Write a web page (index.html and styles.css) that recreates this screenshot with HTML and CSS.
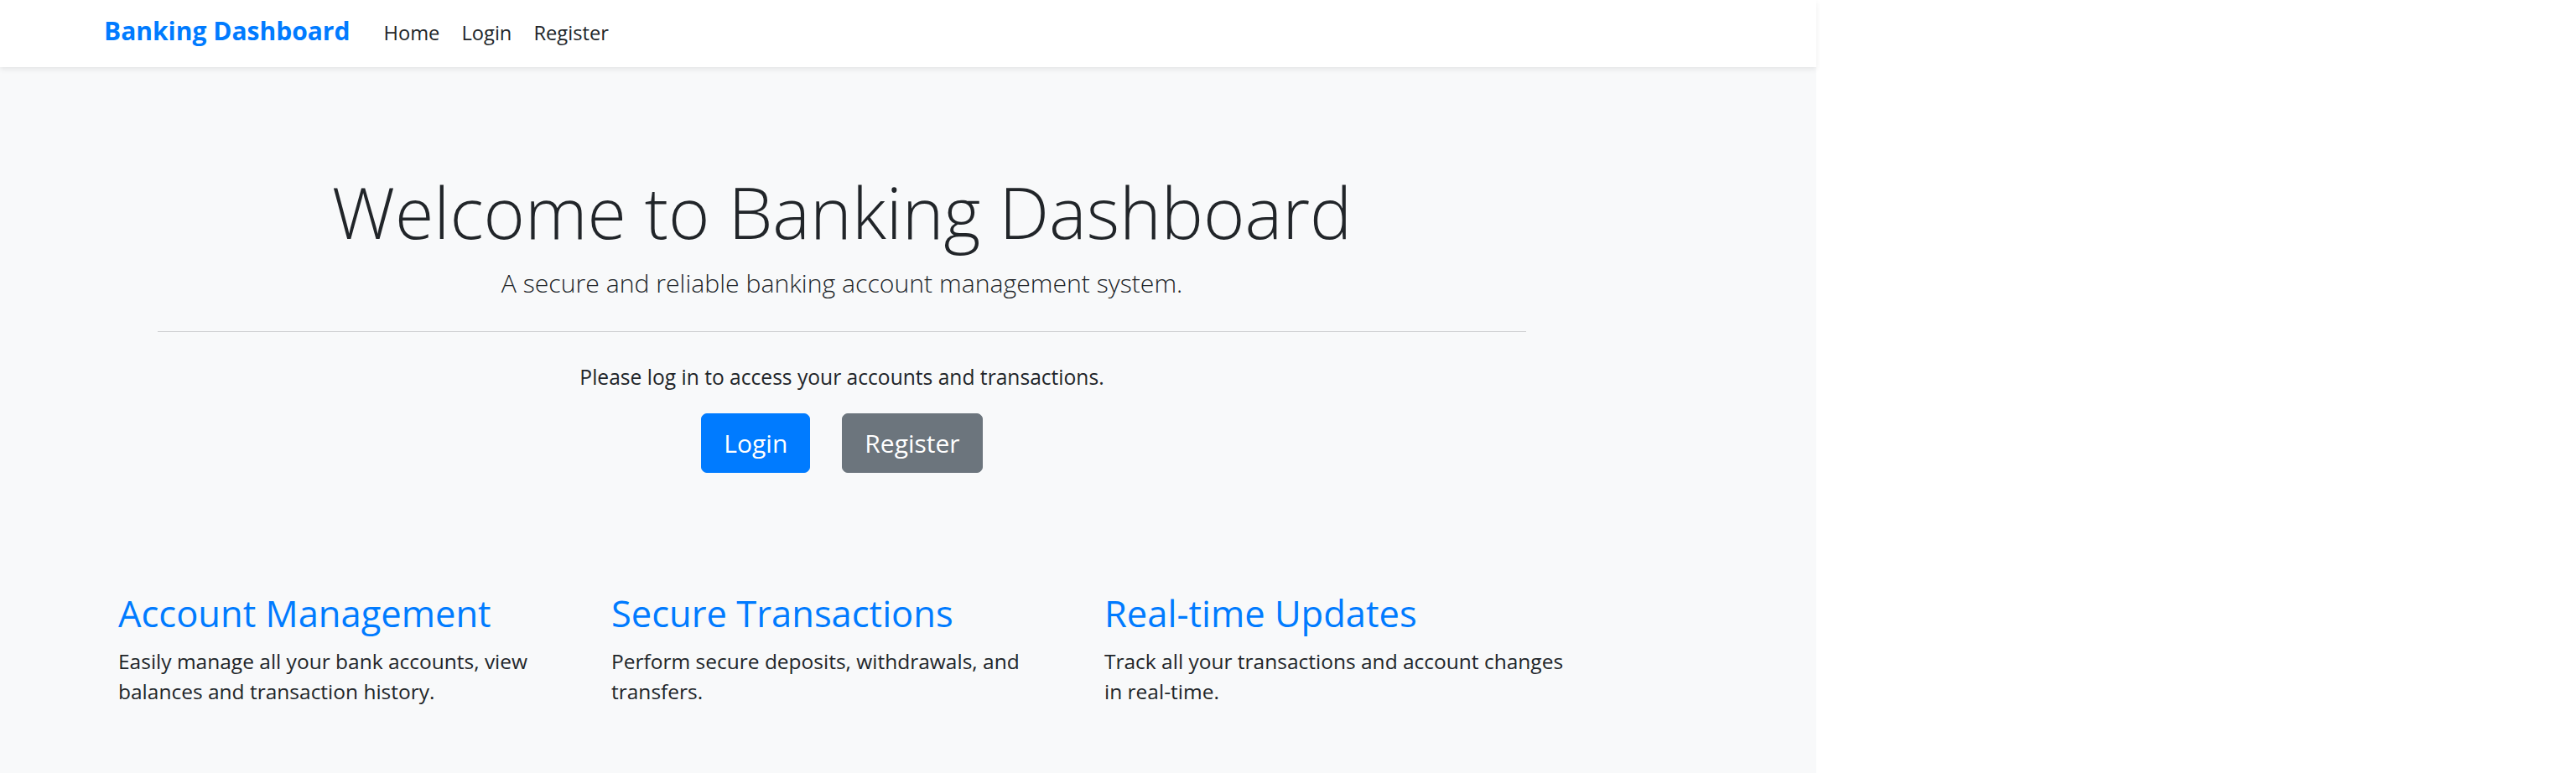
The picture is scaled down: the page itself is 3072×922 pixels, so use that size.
FILE: index.html
```html
<!DOCTYPE html>
<html lang="en">
<head>
<meta charset="utf-8">
<title>Banking Dashboard</title>
<link rel="stylesheet" href="styles.css">
</head>
<body>
<div class="app">
  <nav class="navbar">
    <a class="brand" href="#">Banking Dashboard</a>
    <ul class="nav">
      <li><a class="nav-link" href="#">Home</a></li>
      <li><a class="nav-link" href="#">Login</a></li>
      <li><a class="nav-link" href="#">Register</a></li>
    </ul>
  </nav>
  <main class="main">
    <section class="hero">
      <h1 class="display">Welcome to Banking Dashboard</h1>
      <p class="lead">A secure and reliable banking account management system.</p>
      <hr class="divider">
      <p class="prompt">Please log in to access your accounts and transactions.</p>
      <div class="actions">
        <a class="btn btn-primary" href="#">Login</a>
        <a class="btn btn-secondary" href="#">Register</a>
      </div>
    </section>
    <section class="features">
      <div class="feature">
        <h3 class="feature-title">Account Management</h3>
        <p class="feature-text">Easily manage all your bank accounts, view balances and transaction history.</p>
      </div>
      <div class="feature">
        <h3 class="feature-title">Secure Transactions</h3>
        <p class="feature-text">Perform secure deposits, withdrawals, and transfers.</p>
      </div>
      <div class="feature">
        <h3 class="feature-title">Real-time Updates</h3>
        <p class="feature-text">Track all your transactions and account changes in real-time.</p>
      </div>
    </section>
  </main>
</div>
</body>
</html>
```

FILE: styles.css
```css
* { box-sizing: border-box; }
html, body { margin: 0; padding: 0; background: #fff; }
body {
  font-family: "Open Sans", "Noto Sans", sans-serif;
  font-size: 24.5px;
  line-height: 1.5;
  color: #212529;
}
a { text-decoration: none; }

.app {
  width: 2166px;
  min-height: 922px;
  background: #f8f9fa;
}

.navbar {
  height: 80px;
  display: flex;
  align-items: baseline;
  padding: 14px 0 0 124px;
  background: #fff;
  box-shadow: 0 3px 6px rgba(0, 0, 0, 0.075);
  position: relative;
}
.brand {
  font-size: 30px;
  line-height: 45px;
  font-weight: 700;
  color: #007bff;
  margin-right: 27px;
}
.nav {
  display: flex;
  align-items: baseline;
  list-style: none;
  margin: 0;
  padding: 0;
}
.nav-link {
  display: block;
  padding: 0 13px;
  color: #212529;
  font-size: 23.7px;
}

.main { width: 2166px; }

.hero {
  margin-left: 116px;
  width: 1776px;
  padding: 122px 72px 0;
  text-align: center;
}
.display {
  margin: 0 0 12px;
  font-size: 84.4px;
  font-weight: 300;
  line-height: 1.2;
}
.lead {
  margin: 0;
  font-size: 30.2px;
  font-weight: 300;
  line-height: 1.5;
}
.divider {
  margin: 34px 0 36px;
  border: 0;
  border-top: 1px solid #cfd0d2;
  height: 0;
}
.prompt {
  margin: 0 0 25px;
  font-size: 24.6px;
  line-height: 36px;
}
.actions {
  display: flex;
  justify-content: center;
  gap: 38px;
}
.btn {
  display: inline-block;
  padding: 12px 26px;
  font-size: 30px;
  line-height: 45px;
  border: 1px solid transparent;
  border-radius: 7px;
  color: #fff;
}
.btn-primary { background: #007bff; border-color: #007bff; }
.btn-secondary { background: #6c757d; border-color: #6c757d; }

.features {
  display: grid;
  grid-template-columns: repeat(3, 588px);
  padding-left: 141px;
  margin-top: 142px;
}
.feature { padding-right: 30px; }
.feature-title {
  margin: 0 0 13px;
  font-size: 43.5px;
  font-weight: 400;
  line-height: 1.2;
  color: #007bff;
}
.feature-text {
  margin: 0;
  line-height: 36px;
}
```
